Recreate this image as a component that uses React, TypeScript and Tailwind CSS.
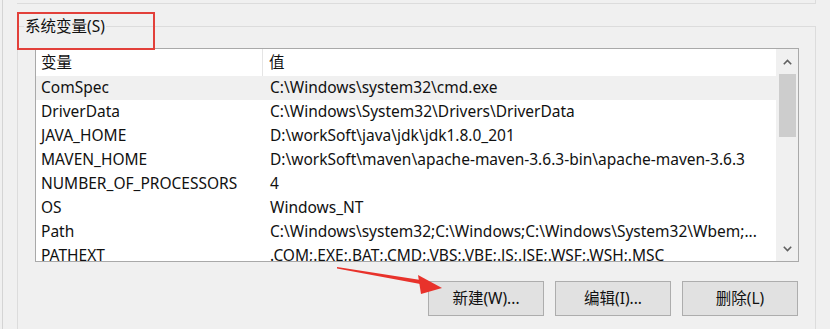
import React from "react";

const rows: [string, string][] = [
  ["ComSpec", "C:\\Windows\\system32\\cmd.exe"],
  ["DriverData", "C:\\Windows\\System32\\Drivers\\DriverData"],
  ["JAVA_HOME", "D:\\workSoft\\java\\jdk\\jdk1.8.0_201"],
  ["MAVEN_HOME", "D:\\workSoft\\maven\\apache-maven-3.6.3-bin\\apache-maven-3.6.3"],
  ["NUMBER_OF_PROCESSORS", "4"],
  ["OS", "Windows_NT"],
  ["Path", "C:\\Windows\\system32;C:\\Windows;C:\\Windows\\System32\\Wbem;..."],
  ["PATHEXT", ".COM;.EXE;.BAT;.CMD;.VBS;.VBE;.JS;.JSE;.WSF;.WSH;.MSC"],
];

const font = { fontFamily: '"Noto Sans", "Noto Sans CJK SC", sans-serif' };

export default function App() {
  return (
    <div
      className="relative w-[830px] h-[329px] overflow-hidden bg-[#f0f0f0] pl-[2px] text-[#111]"
      style={font}
    >
      <div className="h-full border-l border-[#d4d4d4] pl-[14px]">
        {/* previous group box bottom */}
        <div className="w-[799px] h-[4px] border-b border-r border-[#dcdcdc]" />
        {/* group box */}
        <div className="mt-[22px] w-[799px] h-[310px] border-t border-l border-r border-[#dcdcdc]">
          <div className="-mt-[12px] ml-[6px] w-fit px-[1px] text-[15.5px] leading-[22px] bg-[#f0f0f0]">
            系统变量(S)
          </div>
          {/* list box */}
          <div className="mt-[11px] ml-[17px] w-[764px] h-[214px] border border-[#a9a9a9] bg-white flex overflow-hidden">
            <div className="w-[740px] h-full overflow-hidden">
              <div className="flex h-[27px] items-center text-[15.5px]">
                <div className="w-[227px] pl-[5px] h-full flex items-center border-r border-[#e5e5e5]">变量</div>
                <div className="pl-[6px]">值</div>
              </div>
              {rows.map(([k, v], i) => (
                <div
                  key={k}
                  className={
                    "flex h-[24px] items-center text-[15.5px] whitespace-nowrap " +
                    (i === 0 ? "bg-[#f0f0f0]" : "")
                  }
                >
                  <div className="w-[228px] pl-[5px]">{k}</div>
                  <div className="pl-[6px]">{v}</div>
                </div>
              ))}
            </div>
            {/* scrollbar */}
            <div className="w-[22px] h-full bg-[#f0f0f0] flex flex-col items-center">
              <div className="h-[25px] w-full flex items-center justify-center">
                <svg width="9" height="6" viewBox="0 0 9 6">
                  <path d="M0.8 5.2 L4.5 1.5 L8.2 5.2" fill="none" stroke="#606060" strokeWidth="1.6" />
                </svg>
              </div>
              <div className="w-[17px] h-[63px] bg-[#cdcdcd]" />
              <div className="flex-1" />
              <div className="h-[25px] w-full flex items-center justify-center">
                <svg width="9" height="6" viewBox="0 0 9 6">
                  <path d="M0.8 0.8 L4.5 4.5 L8.2 0.8" fill="none" stroke="#606060" strokeWidth="1.6" />
                </svg>
              </div>
            </div>
          </div>
          {/* buttons */}
          <div className="mt-[19px] ml-[17px] w-[763px] flex justify-end gap-[11px]">
            {["新建(W)...", "编辑(I)...", "删除(L)"].map((t) => (
              <div
                key={t}
                className="w-[116px] h-[35px] border border-[#adadad] bg-[#e1e1e1] flex items-center justify-center text-[15.5px]"
              >
                {t}
              </div>
            ))}
          </div>
        </div>
      </div>

      {/* red annotation rectangle */}
      <div className="absolute left-[17px] top-[12px] w-[138px] h-[38px] border-2 border-[#e2403a]" />

      {/* red arrow */}
      <svg className="absolute left-0 top-0" width="830" height="329" viewBox="0 0 830 329">
        <polygon points="337,267 424,280.5 423,284.5 337,268.6" fill="#e8322b" />
        <polygon points="418,275 442,288 421,294" fill="#e8322b" />
      </svg>
    </div>
  );
}
